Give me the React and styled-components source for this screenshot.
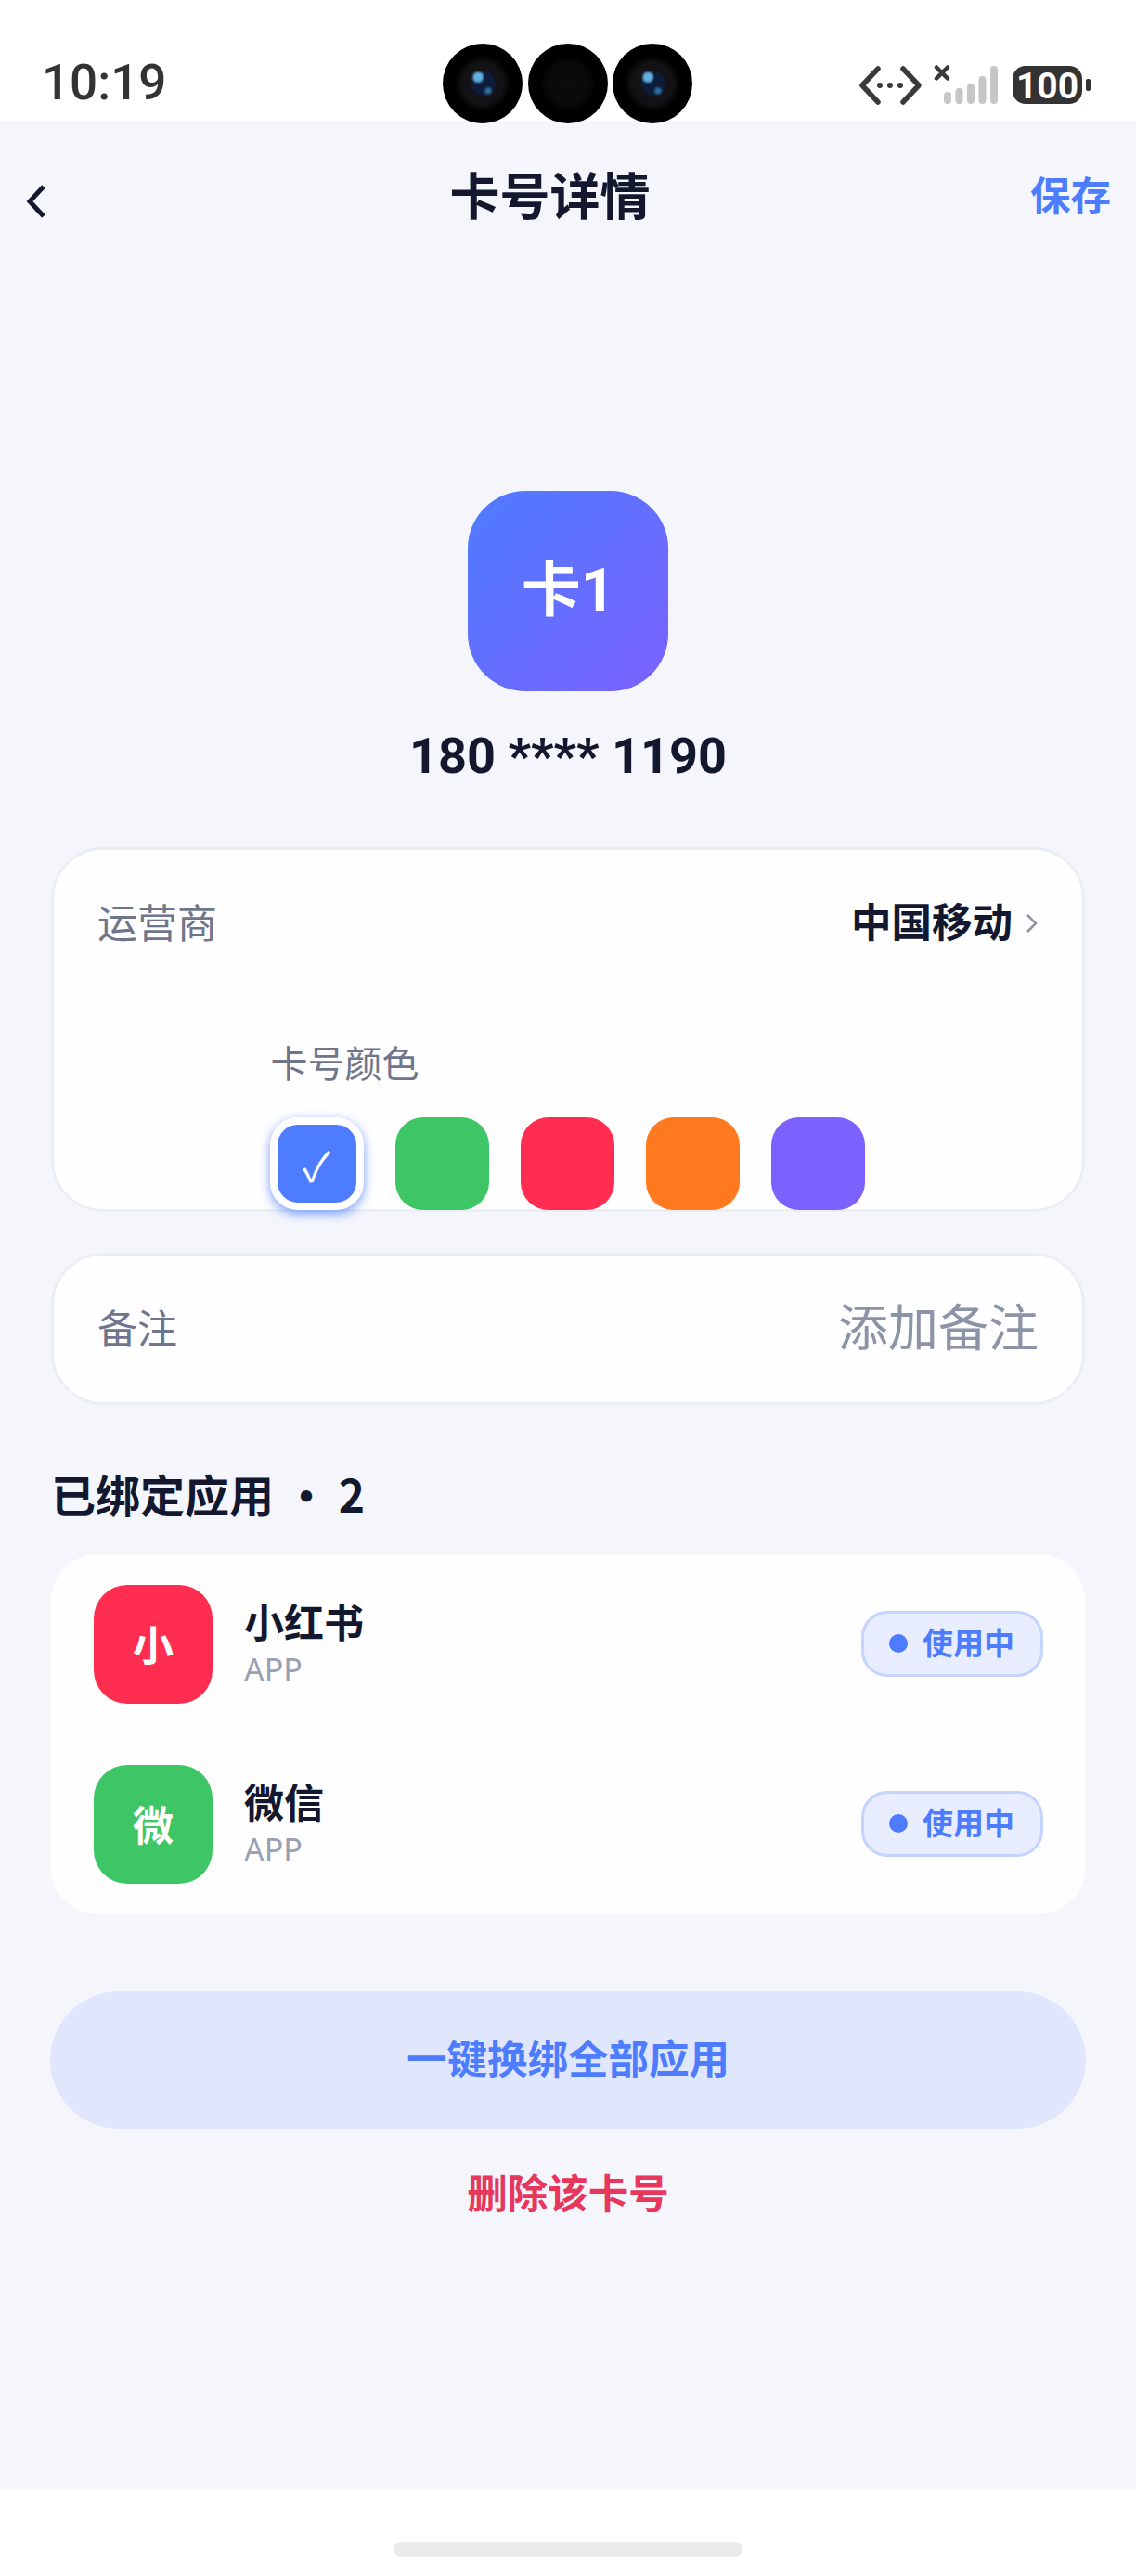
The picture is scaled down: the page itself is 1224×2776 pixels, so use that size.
import React from "react"
import styled, { createGlobalStyle } from "styled-components"

const GlobalStyle = createGlobalStyle`
    html, body {
        margin: 0;
        padding: 0;
        background: #ffffff;
        font-family: Roboto, "Noto Sans CJK SC", "Noto Sans", sans-serif;
    }
`

const Phone = styled.div`
    position: relative;
    display: flex;
    flex-direction: column;
    width: 1224px;
    height: 2776px;
    overflow: hidden;
    background: #ffffff;
    color: #14182f;
`

const StatusBar = styled.div`
    display: flex;
    align-items: center;
    justify-content: space-between;
    height: 130px;
    box-sizing: border-box;
    padding: 48px 48px 0 45px;
    background: #ffffff;
`

const Time = styled.span`
    font-family: Roboto, sans-serif;
    font-size: 53px;
    font-weight: 500;
    color: #333333;
`

const StatusIcons = styled.div`
    display: flex;
    align-items: center;
    margin-top: 6px;
`

const Cameras = styled.div`
    position: absolute;
    top: 47px;
    left: 477px;
    display: flex;
    gap: 5.5px;
`

const Main = styled.main`
    display: flex;
    flex-direction: column;
    flex: 1;
    background: #f4f6fc;
`

const NavBar = styled.nav`
    display: flex;
    align-items: center;
    justify-content: space-between;
    height: 162px;
    box-sizing: border-box;
    padding: 0 27px 6px;
`

const BackButton = styled.div`
    display: flex;
    width: 48px;
    margin-top: 18px;
`

const Title = styled.h1`
    margin: 0;
    font-size: 54px;
    font-weight: 700;
    color: #14182f;
`

const SaveLink = styled.span`
    font-size: 43.5px;
    font-weight: 700;
    color: #4d7cff;
`

const Hero = styled.section`
    display: flex;
    flex-direction: column;
    align-items: center;
    padding-top: 237px;
`

const CardIcon = styled.div`
    display: flex;
    align-items: center;
    justify-content: center;
    width: 216px;
    height: 216px;
    box-sizing: border-box;
    padding-bottom: 14px;
    border-radius: 62px;
    background: linear-gradient(135deg, #4d7cff, #7b61ff);
    color: #ffffff;
    font-size: 64px;
    font-weight: 700;
`

const PhoneNumber = styled.div`
    margin-top: 39px;
    font-size: 54px;
    font-weight: 700;
    line-height: 62px;
    color: #14182f;
`

const Content = styled.div`
    display: flex;
    flex-direction: column;
    padding: 0 54px;
    margin-top: 67px;
`

const Card = styled.section`
    margin: 0 1px;
    box-sizing: border-box;
    background: #fefefe;
    border: 3px solid #eceef5;
    border-radius: 56px;
`

const InfoRow = styled.div`
    display: flex;
    align-items: center;
    justify-content: space-between;
    height: ${(p) => p.$height}px;
    padding: 0 47px 7px;
    box-sizing: border-box;
    border-bottom: ${(p) => (p.$divided ? "2px solid #fcfcfd" : "none")};
`

const Label = styled.span`
    font-size: 43px;
    color: #6f768b;
`

const Value = styled.span`
    display: flex;
    align-items: center;
    gap: 14px;
    font-size: 43.5px;
    font-weight: 700;
    color: #14182f;
`

const Chevron = styled.svg`
    margin-top: 6px;
`

const Placeholder = styled.span`
    margin-bottom: 3px;
    font-size: 54px;
    color: #8b93a7;
`

const ColorSection = styled.div`
    display: flex;
    justify-content: center;
    height: 227px;
`

const ColorBlock = styled.div`
    display: flex;
    flex-direction: column;
    margin-right: 2px;
`

const ColorLabel = styled.span`
    margin-top: 50px;
    margin-left: 1px;
    font-size: 40px;
    line-height: 44px;
    color: #6f768b;
`

const Swatches = styled.div`
    display: flex;
    gap: 34px;
    margin-top: 34px;
`

const Swatch = styled.div`
    display: flex;
    align-items: center;
    justify-content: center;
    width: 101px;
    height: 100px;
    box-sizing: border-box;
    border-radius: 30px;
    background: ${(p) => p.$color};
    color: #ffffff;
    font-size: 44px;
    ${(p) =>
        p.$selected &&
        `
        border: 8px solid #ffffff;
        box-shadow: 0 4px 12px rgba(77, 124, 255, 0.75);
    `}
`

const NoteCard = styled(Card)`
    margin-top: 44px;
`

const SectionTitle = styled.h2`
    margin: 63px 1px 0;
    font-family: "Noto Sans CJK SC", sans-serif;
    font-size: 48px;
    font-weight: 700;
    line-height: 64px;
    color: #14182f;
`

const AppCard = styled.section`
    margin: 34px 1px 0;
    background: #fefefe;
    border-radius: 50px;
    padding: 0 45px 0 46px;
`

const AppRow = styled.div`
    display: flex;
    align-items: center;
    gap: 34px;
    height: 194px;
`

const AppIcon = styled.div`
    display: flex;
    align-items: center;
    justify-content: center;
    width: 128px;
    height: 128px;
    box-sizing: border-box;
    padding-bottom: 3px;
    border-radius: 36px;
    background: ${(p) => p.$color};
    color: #ffffff;
    font-size: 44px;
    font-weight: 700;
`

const AppInfo = styled.div`
    display: flex;
    flex-direction: column;
    flex: 1;
`

const AppName = styled.span`
    font-size: 43px;
    font-weight: 700;
    line-height: 54px;
    color: #14182f;
`

const AppType = styled.span`
    font-family: "Noto Sans", sans-serif;
    font-size: 34px;
    line-height: 44px;
    color: #98a0b3;
`

const StatusBadge = styled.div`
    display: flex;
    align-items: center;
    gap: 16px;
    width: 196px;
    height: 71px;
    box-sizing: border-box;
    margin-top: -2px;
    padding: 0 0 4px 27px;
    border: 3px solid #c5d3ff;
    border-radius: 28px;
    background: #e8edff;
    color: #4d7cff;
    font-size: 33px;
    font-weight: 700;
`

const Dot = styled.span`
    width: 20px;
    height: 20px;
    margin-top: 4px;
    border-radius: 50%;
    background: #4d7cff;
`

const RebindButton = styled.button`
    height: 148px;
    margin-top: 83px;
    padding: 0 0 8px;
    border: none;
    border-radius: 74px;
    background: #e0e6fb;
    color: #4d7cff;
    font-family: inherit;
    font-size: 43.5px;
    font-weight: 700;
`

const DeleteLink = styled.div`
    margin-top: 36px;
    text-align: center;
    font-size: 43.5px;
    font-weight: 700;
    color: #e8375d;
`

const Footer = styled.footer`
    display: flex;
    align-items: flex-end;
    justify-content: center;
    height: 94px;
    box-sizing: border-box;
    padding-bottom: 21px;
    background: #ffffff;
`

const HomeBar = styled.div`
    width: 376px;
    height: 16px;
    border-radius: 8px;
    background: #ebebeb;
`

const BatteryText = styled.text`
    font-family: Roboto, sans-serif;
    font-size: 39px;
    font-weight: 700;
    fill: #ffffff;
`

function Camera({ id, lens }) {
    return (
        <svg width="86" height="86" viewBox="0 0 86 86">
            <defs>
                <radialGradient id={id}>
                    <stop offset="0" stopColor={lens ? "#15161a" : "#0b0b0c"} />
                    <stop offset="0.75" stopColor={lens ? "#121214" : "#0a0a0b"} />
                    <stop offset="1" stopColor="#000000" />
                </radialGradient>
                <filter id={`${id}Soft`}>
                    <feGaussianBlur stdDeviation="1" />
                </filter>
            </defs>
            <circle cx="43" cy="43" r="43" fill="#000000" />
            <circle cx="43" cy="43" r="30" fill={`url(#${id})`} />
            {lens && (
                <g filter={`url(#${id}Soft)`}>
                    <circle cx="44" cy="43" r="13" fill="#0d1c3a" />
                    <circle cx="38" cy="36" r="5.5" fill="#62b0e2" />
                    <circle cx="49" cy="51" r="3.5" fill="#2f6f9e" />
                </g>
            )}
        </svg>
    )
}

function NetworkIcons() {
    const bars = [13, 17, 22, 30, 41]
    return (
        <svg width="250" height="44" viewBox="0 0 250 44">
            <g fill="none" stroke="#3a3a3a" strokeWidth="5.5" strokeLinecap="round" strokeLinejoin="round">
                <path d="M20 4 L3 22 L20 40" />
                <path d="M47 4 L64 22 L47 40" />
                <path d="M83 2.5 L95 14.5 M95 2.5 L83 14.5" strokeWidth="4.5" />
            </g>
            <g fill="#3a3a3a">
                <circle cx="22" cy="22" r="3" />
                <circle cx="33" cy="22" r="3" />
                <circle cx="44" cy="22" r="3" />
            </g>
            {bars.map((h, i) => (
                <rect key={i} x={91 + i * 12.5} y={42 - h} width="8" height={h} rx="4" fill="#c6c6c6" />
            ))}
            <rect x="165" y="1" width="75" height="41" rx="14" fill="#333333" />
            <rect x="244" y="15" width="5" height="13" rx="2" fill="#333333" />
            <BatteryText x="202.5" y="35.5" textAnchor="middle">100</BatteryText>
        </svg>
    )
}

function App() {
    const colors = ["#4d7cff", "#3ec565", "#ff2d4f", "#ff7a1f", "#7d61ff"]
    const apps = [
        { name: "小红书", icon: "小", color: "#ff2d4f" },
        { name: "微信", icon: "微", color: "#3ec565" },
    ]

    return (
        <Phone>
            <GlobalStyle />
            <StatusBar>
                <Time>10:19</Time>
                <StatusIcons>
                    <NetworkIcons />
                </StatusIcons>
            </StatusBar>
            <Cameras>
                <Camera id="camA" lens />
                <Camera id="camB" />
                <Camera id="camC" lens />
            </Cameras>
            <Main>
                <NavBar>
                    <BackButton>
                        <svg width="24" height="36" viewBox="0 0 24 36">
                            <path d="M20 2 L5 18 L20 34" fill="none" stroke="#14182f" strokeWidth="5" />
                        </svg>
                    </BackButton>
                    <Title>卡号详情</Title>
                    <SaveLink>保存</SaveLink>
                </NavBar>
                <Hero>
                    <CardIcon>卡1</CardIcon>
                    <PhoneNumber>180 **** 1190</PhoneNumber>
                </Hero>
                <Content>
                    <Card>
                        <InfoRow $height={160} $divided>
                            <Label>运营商</Label>
                            <Value>
                                中国移动
                                <Chevron width="14" height="24" viewBox="0 0 14 24">
                                    <path d="M2 3 L11 12 L2 21" fill="none" stroke="#8b93a7" strokeWidth="2.5" />
                                </Chevron>
                            </Value>
                        </InfoRow>
                        <ColorSection>
                            <ColorBlock>
                                <ColorLabel>卡号颜色</ColorLabel>
                                <Swatches>
                                    {colors.map((c, i) => (
                                        <Swatch key={c} $color={c} $selected={i === 0}>
                                            {i === 0 && "✓"}
                                        </Swatch>
                                    ))}
                                </Swatches>
                            </ColorBlock>
                        </ColorSection>
                    </Card>
                    <NoteCard>
                        <InfoRow $height={158}>
                            <Label>备注</Label>
                            <Placeholder>添加备注</Placeholder>
                        </InfoRow>
                    </NoteCard>
                    <SectionTitle>已绑定应用 · 2</SectionTitle>
                    <AppCard>
                        {apps.map((a) => (
                            <AppRow key={a.name}>
                                <AppIcon $color={a.color}>{a.icon}</AppIcon>
                                <AppInfo>
                                    <AppName>{a.name}</AppName>
                                    <AppType>APP</AppType>
                                </AppInfo>
                                <StatusBadge>
                                    <Dot />
                                    使用中
                                </StatusBadge>
                            </AppRow>
                        ))}
                    </AppCard>
                    <RebindButton>一键换绑全部应用</RebindButton>
                    <DeleteLink>删除该卡号</DeleteLink>
                </Content>
            </Main>
            <Footer>
                <HomeBar />
            </Footer>
        </Phone>
    )
}

export default App
